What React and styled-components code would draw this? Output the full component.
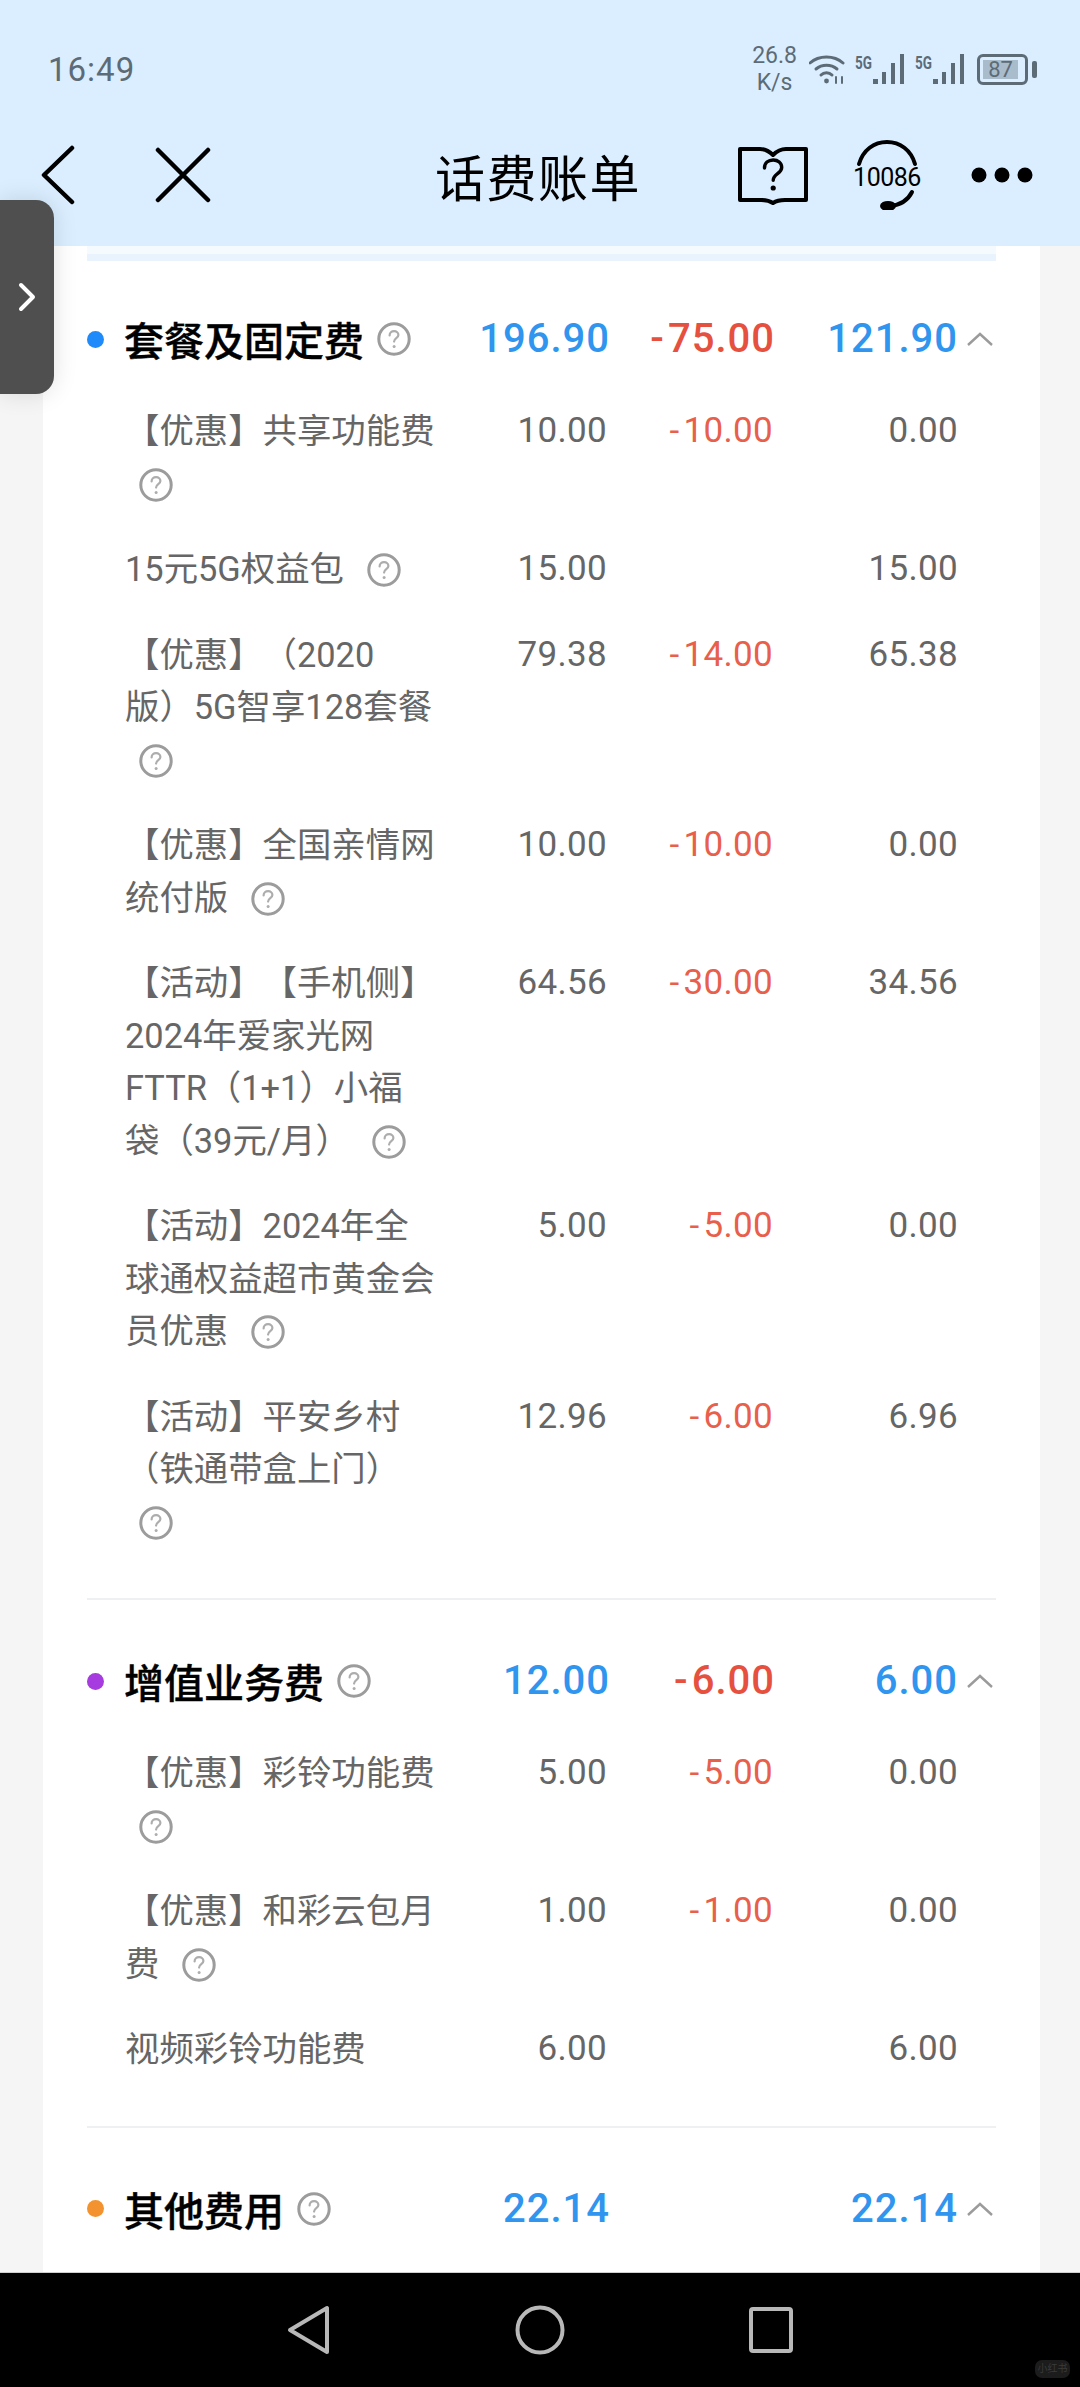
import React from "react";
import styled, { createGlobalStyle, css } from "styled-components";

const GlobalStyle = createGlobalStyle`
  html, body {
    margin: 0;
    padding: 0;
    background: #f5f5f5;
  }
  * {
    box-sizing: border-box;
  }
`;

const sections = [
  {
    title: "套餐及固定费",
    dot: "#1f8bfa",
    total: ["196.90", "-75.00", "121.90"],
    rows: [
      { name: "【优惠】共享功能费\n", values: ["10.00", "-10.00", "0.00"] },
      { name: "15元5G权益包", values: ["15.00", "", "15.00"] },
      { name: "【优惠】（2020\n版）5G智享128套餐\n", values: ["79.38", "-14.00", "65.38"] },
      { name: "【优惠】全国亲情网\n统付版", values: ["10.00", "-10.00", "0.00"] },
      { name: "【活动】【手机侧】\n2024年爱家光网\nFTTR（1+1）小福\n袋（39元/月）", values: ["64.56", "-30.00", "34.56"] },
      { name: "【活动】2024年全\n球通权益超市黄金会\n员优惠", values: ["5.00", "-5.00", "0.00"] },
      { name: "【活动】平安乡村\n（铁通带盒上门）\n", values: ["12.96", "-6.00", "6.96"] },
    ],
  },
  {
    title: "增值业务费",
    dot: "#a63be0",
    total: ["12.00", "-6.00", "6.00"],
    rows: [
      { name: "【优惠】彩铃功能费\n", values: ["5.00", "-5.00", "0.00"] },
      { name: "【优惠】和彩云包月\n费", values: ["1.00", "-1.00", "0.00"] },
      { name: "视频彩铃功能费", values: ["6.00", "", "6.00"], noHelp: true },
    ],
  },
  {
    title: "其他费用",
    dot: "#f3932f",
    total: ["22.14", "", "22.14"],
    rows: [],
  },
];

function HelpIcon({ className }) {
  return (
    <svg className={className} viewBox="0 0 34 34" fill="none">
      <circle cx="17" cy="17" r="15.2" stroke="#9c9c9c" strokeWidth="3" />
      <path
        d="M12.6 13.4c0-2.6 2-4.2 4.500-4.2 2.400 0 4.300 1.500 4.300 3.800 0 3.200-4.300 3.200-4.300 6.600"
        stroke="#adadad"
        strokeWidth="2.2"
        strokeLinecap="round"
      />
      <circle cx="17.1" cy="24.4" r="1.5" fill="#adadad" />
    </svg>
  );
}

function SignalBars() {
  return (
    <svg width="32" height="30" viewBox="0 0 32 30" fill="#5d6b76">
      <rect x="0" y="25" width="5" height="5" />
      <rect x="9" y="18" width="4" height="12" />
      <rect x="18" y="9" width="4" height="21" />
      <rect x="27" y="0" width="4" height="30" />
    </svg>
  );
}

function WifiIcon() {
  return (
    <svg width="36" height="32" viewBox="0 0 36 32" fill="none" stroke="#5d6b76" strokeWidth="3" strokeLinecap="round">
      <path d="M1 10C10 2 25 2 34 10" />
      <path d="M7 16C13 11 22 11 28 16" />
      <path d="M12 22C15 19 20 19 23 22" />
      <circle cx="17.5" cy="28" r="2.4" fill="#5d6b76" stroke="none" />
      <path d="M27 24v6M33 24v6" strokeWidth="2" />
    </svg>
  );
}

function BookIcon() {
  return (
    <svg width="72" height="60" viewBox="0 0 72 60" fill="none" stroke="#000" strokeWidth="4">
      <path d="M3 4H23C29 4 33 7 36 10C39 7 43 4 49 4H69V55H48C43 55 39 56 36 58C33 56 29 55 24 55H3Z" strokeLinejoin="round" />
      <path
        d="M27.5 23c0-5 3.800-8 8.700-8 4.800 0 8.500 3 8.500 7.400 0 6.200-8.500 6.100-8.500 12.800"
        strokeWidth="3.400"
        strokeLinecap="round"
      />
      <circle cx="36.200" cy="43" r="2.600" fill="#000" stroke="none" />
    </svg>
  );
}

function HotlineIcon() {
  return (
    <HotlineWrap>
      <svg width="70" height="70" viewBox="0 0 70 70" fill="none" stroke="#000" strokeWidth="4" strokeLinecap="round">
        <path d="M7 24C11 10 22 2 35 2C48 2 59 10 63 24" />
        <path d="M60 52C56 60 49 65 38 66" />
        <ellipse cx="36" cy="66" rx="6" ry="3" fill="#000" />
      </svg>
      <HotlineText>10086</HotlineText>
    </HotlineWrap>
  );
}

function App() {
  return (
    <>
      <GlobalStyle />
      <Screen>
        <TopBar>
          <StatusBar>
            <Clock>16:49</Clock>
            <StatusIcons>
              <NetSpeed>
                <span>26.8</span>
                <span>K/s</span>
              </NetSpeed>
              <WifiIcon />
              <Carrier>
                <CarrierLabel>5G</CarrierLabel>
                <SignalBars />
              </Carrier>
              <Carrier>
                <CarrierLabel>5G</CarrierLabel>
                <SignalBars />
              </Carrier>
              <Battery>
                <BatteryLevel>87</BatteryLevel>
              </Battery>
            </StatusIcons>
          </StatusBar>
          <NavBar>
            <NavGroup>
              <svg width="34" height="60" viewBox="0 0 34 60" fill="none" stroke="#000" strokeWidth="4.500" strokeLinecap="round" strokeLinejoin="round">
                <path d="M31 3L3 30L31 57" />
              </svg>
              <CloseIcon width="56" height="56" viewBox="0 0 56 56" fill="none" stroke="#000" strokeWidth="4.500" strokeLinecap="round">
                <path d="M3 3L53 53M53 3L3 53" />
              </CloseIcon>
            </NavGroup>
            <Title>话费账单</Title>
            <NavActions>
              <BookIcon />
              <HotlineIcon />
              <MoreIcon width="62" height="20" viewBox="0 0 62 20" fill="#000">
                <circle cx="8" cy="10" r="7.500" />
                <circle cx="31" cy="10" r="7.500" />
                <circle cx="54" cy="10" r="7.500" />
              </MoreIcon>
            </NavActions>
          </NavBar>
        </TopBar>

        <Content>
          <Card>
            <TopStrip />
            {sections.map((section, i) => (
              <Section key={section.title} $first={i === 0}>
                <SectionHead>
                  <SectionName>
                    <Dot $color={section.dot} />
                    <SectionTitle>{section.title}</SectionTitle>
                    <SectionHelp />
                  </SectionName>
                  <TotalValue>{section.total[0]}</TotalValue>
                  <TotalValue $discount>{section.total[1]}</TotalValue>
                  <TotalValue>{section.total[2]}</TotalValue>
                  <Caret width="26" height="14" viewBox="0 0 26 14" fill="none" stroke="#9b9b9b" strokeWidth="2.400">
                    <path d="M1 13L13 2L25 13" />
                  </Caret>
                </SectionHead>
                {section.rows.map((row) => (
                  <FeeRow key={row.name}>
                    <FeeName>
                      {row.name}
                      {row.name.endsWith("\n") ? "" : " "}
                      {!row.noHelp && <RowHelp />}
                    </FeeName>
                    <FeeValue>{row.values[0]}</FeeValue>
                    <FeeValue $discount>{row.values[1]}</FeeValue>
                    <FeeValue>{row.values[2]}</FeeValue>
                  </FeeRow>
                ))}
              </Section>
            ))}
          </Card>
        </Content>

        <SideTab>
          <svg width="18" height="30" viewBox="0 0 18 30" fill="none" stroke="#fff" strokeWidth="4" strokeLinecap="round" strokeLinejoin="round">
            <path d="M3 3L15 15L3 27" />
          </svg>
        </SideTab>

        <SystemNav>
          <svg width="44" height="50" viewBox="0 0 44 50" fill="none" stroke="#b8b8b8" strokeWidth="4" strokeLinejoin="round">
            <path d="M40 3V47L3 25Z" />
          </svg>
          <svg width="50" height="50" viewBox="0 0 50 50" fill="none" stroke="#b8b8b8" strokeWidth="4">
            <circle cx="25" cy="25" r="22.500" />
          </svg>
          <svg width="44" height="46" viewBox="0 0 44 46" fill="none" stroke="#b8b8b8" strokeWidth="4" strokeLinejoin="round">
            <rect x="2" y="2" width="40" height="42" rx="2" />
          </svg>
          <Watermark>小红书</Watermark>
        </SystemNav>
      </Screen>
    </>
  );
}

export default App;

const fontStack = `Roboto, "Noto Sans CJK SC", sans-serif`;

// the minus sign of discount amounts sits wider than a plain hyphen
const minusGap = (size) => css`
  &::first-letter {
    padding: 0 ${size};
  }
`;

const Screen = styled.div`
  position: relative;
  width: 1080px;
  height: 2387px;
  display: flex;
  flex-direction: column;
  overflow: hidden;
  background: #f5f5f5;
  font-family: ${fontStack};
  text-spacing-trim: space-all;
`;

const TopBar = styled.header`
  height: 246px;
  flex-shrink: 0;
  background: #daeeff;
`;

const StatusBar = styled.div`
  height: 104px;
  padding: 34px 52px 0 48px;
  display: flex;
  align-items: center;
  justify-content: space-between;
  color: #5d6b76;
`;

const Clock = styled.span`
  font-size: 33px;
  letter-spacing: 1px;
`;

const StatusIcons = styled.div`
  display: flex;
  align-items: center;
  gap: 10px;
`;

const NetSpeed = styled.div`
  display: flex;
  flex-direction: column;
  align-items: center;
  font-size: 23px;
  line-height: 27px;
  margin-right: 2px;
`;

const Carrier = styled.div`
  display: flex;
  align-items: flex-start;
  width: 50px;
`;

const CarrierLabel = styled.span`
  font-size: 18px;
  font-weight: 700;
  line-height: 18px;
  width: 18px;
  transform: scaleX(0.75);
  transform-origin: left;
`;

const Battery = styled.div`
  position: relative;
  width: 51px;
  height: 31px;
  margin-left: 2px;
  border: 3px solid #5d6b76;
  border-radius: 6px;
  padding: 3px;
  &::after {
    content: "";
    position: absolute;
    right: -12px;
    top: 4px;
    width: 5px;
    height: 17px;
    border-radius: 2px;
    background: #5d6b76;
  }
`;

const BatteryLevel = styled.div`
  height: 100%;
  width: 90%;
  background: #a9bccb;
  font-size: 22px;
  line-height: 19px;
  text-align: center;
`;

const NavBar = styled.div`
  height: 142px;
  padding: 0 45px 0 41px;
  display: grid;
  grid-template-columns: 1fr auto 1fr;
  align-items: center;
`;

const NavGroup = styled.div`
  display: flex;
  align-items: center;
`;

const CloseIcon = styled.svg`
  margin-left: 80px;
`;

const Title = styled.h1`
  margin: 0;
  font-size: 50px;
  font-weight: 400;
  letter-spacing: 1.5px;
  color: #000;
`;

const NavActions = styled.div`
  display: flex;
  align-items: center;
  justify-content: flex-end;
  gap: 43px;
`;

const MoreIcon = styled.svg`
  margin: 0 2px 0 6px;
`;

const HotlineWrap = styled.div`
  position: relative;
  width: 70px;
  height: 70px;
`;

const HotlineText = styled.span`
  position: absolute;
  left: 0;
  right: 0;
  top: 23px;
  text-align: center;
  font-size: 25px;
  line-height: 30px;
  letter-spacing: -0.5px;
  color: #000;
`;

const Content = styled.main`
  flex: 1;
  min-height: 0;
  padding: 0 40px 0 43px;
  overflow: hidden;
`;

const Card = styled.div`
  height: 100%;
  background: #fff;
  padding: 0 44px;
`;

const TopStrip = styled.div`
  height: 15px;
  background: linear-gradient(#f5faff 0 50%, #e8f3fe 50%);
`;

const Section = styled.section`
  padding-top: ${(p) => (p.$first ? "49px" : "52px")};
  padding-bottom: 51px;
  border-bottom: 2px solid #eef0f1;
`;

const SectionHead = styled.div`
  display: grid;
  grid-template-columns: 352px 171px 165px 183px 38px;
  align-items: center;
  height: 52px;
  margin-bottom: 42px;
`;

const SectionName = styled.div`
  display: flex;
  align-items: center;
`;

const Dot = styled.i`
  width: 17px;
  height: 17px;
  border-radius: 50%;
  margin-right: 20px;
  background: ${(p) => p.$color};
`;

const SectionTitle = styled.span`
  font-size: 40px;
  font-weight: 500;
  color: #000;
  -webkit-text-stroke: 0.4px #000;
`;

const SectionHelp = styled(HelpIcon)`
  width: 34px;
  height: 34px;
  margin-left: 13px;
`;

const TotalValue = styled.span`
  font-size: 40px;
  font-weight: 500;
  line-height: 52px;
  text-align: right;
  letter-spacing: 1px;
  color: ${(p) => (p.$discount ? "#e6513f" : "#2f95ee")};
  ${(p) => p.$discount && minusGap("3px")}
`;

const Caret = styled.svg`
  margin-left: 9px;
`;

const FeeRow = styled.div`
  display: grid;
  grid-template-columns: 315px 167px 166px 185px;
  padding: 1px 0 0 38px;
  margin-bottom: 32px;
  &:last-child {
    margin-bottom: -1px;
  }
`;

const FeeName = styled.div`
  font-size: 34.4px;
  line-height: 52.5px;
  color: #666;
  white-space: pre-line;
`;

const RowHelp = styled(HelpIcon)`
  width: 34px;
  height: 34px;
  margin-left: 14px;
  vertical-align: -6px;
`;

const FeeValue = styled.span`
  font-size: 35px;
  line-height: 52.5px;
  text-align: right;
  letter-spacing: 0.3px;
  color: ${(p) => (p.$discount ? "#e8604c" : "#666")};
  ${(p) => p.$discount && minusGap("4px")}
`;

const SideTab = styled.div`
  position: absolute;
  left: 0;
  top: 200px;
  width: 54px;
  height: 194px;
  padding-left: 18px;
  display: flex;
  align-items: center;
  background: #4f4f4f;
  border-radius: 0 18px 18px 0;
  box-shadow: 0 0 24px rgba(0, 0, 0, 0.12);
`;

const SystemNav = styled.nav`
  position: relative;
  height: 115px;
  flex-shrink: 0;
  background: #000;
  border-top: 1px solid #cfcfcf;
  display: grid;
  grid-template-columns: 44px 50px 44px;
  justify-content: center;
  column-gap: 184px;
  align-items: center;
`;

const Watermark = styled.span`
  position: absolute;
  right: 10px;
  bottom: 9px;
  width: 35px;
  height: 18px;
  border-radius: 7px;
  background: #1c1c1c;
  color: #3a3a3a;
  font-size: 10px;
  line-height: 18px;
  text-align: center;
`;
